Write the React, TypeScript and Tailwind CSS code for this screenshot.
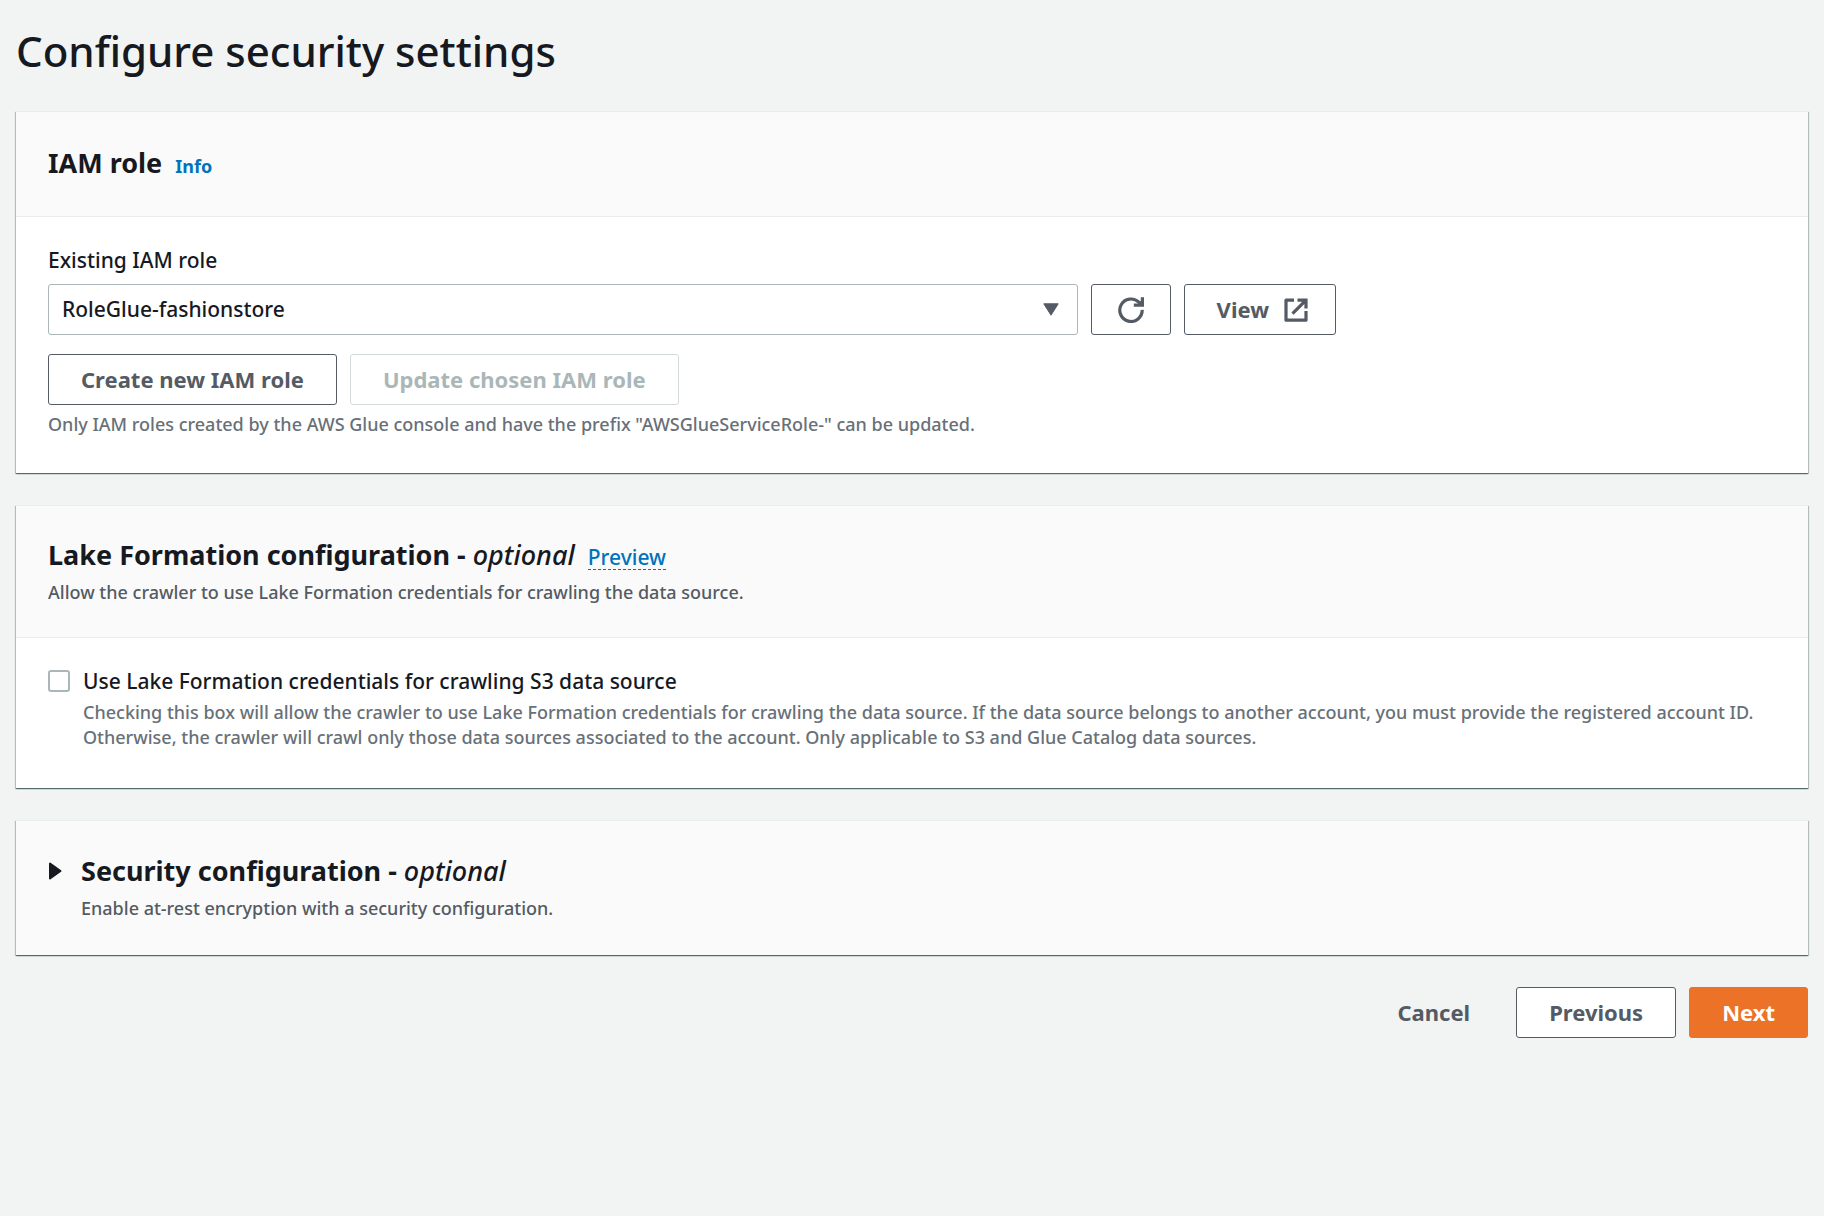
import { useState, type ReactNode } from "react";

const focusRing = "focus-visible:outline-2 focus-visible:outline-offset-2 focus-visible:outline-[#0073bb]";

function Card({ children }: { children: ReactNode }) {
  return (
    <section className="border-t border-[#eaeded] bg-white shadow-[0_1px_1px_0_rgba(0,28,36,0.45),1px_1px_1px_0_rgba(0,28,36,0.2),-1px_1px_1px_0_rgba(0,28,36,0.2)]">
      {children}
    </section>
  );
}

type ButtonProps = {
  children: ReactNode;
  variant?: "normal" | "primary" | "link";
  disabled?: boolean;
  label?: string;
};

function Button({ children, variant = "normal", disabled, label }: ButtonProps) {
  const looks = {
    normal:
      "border-[#545b64] bg-white text-[#545b64] hover:bg-[#fafafa] disabled:border-[#d5dbdb] disabled:text-[#aab7b8]",
    primary: "border-[#eb7226] bg-[#eb7226] text-white",
    link: "border-transparent text-[#545b64]",
  };
  return (
    <button
      type="button"
      disabled={disabled}
      aria-label={label}
      className={`flex h-[51px] shrink-0 items-center justify-center gap-[15px] rounded-[3px] border px-8 text-[22px] font-bold whitespace-nowrap ${looks[variant]} ${focusRing}`}
    >
      {children}
    </button>
  );
}

function RefreshIcon() {
  return (
    <svg viewBox="0 0 26 26" className="-mx-[6px] size-[26px] shrink-0" fill="none" stroke="currentColor" strokeWidth="3.2" aria-hidden="true">
      <path d="M24.2 12.9A11.2 11.2 0 1 1 20.8 5.2L23.5 8" />
      <path d="M24.4 0.2v8h-8.6" />
      <path d="M20 4.5l4 -0.5v4.2h-4z" fill="currentColor" stroke="none" />
    </svg>
  );
}

function ExternalIcon() {
  return (
    <svg viewBox="0 0 24 24" className="-mr-[5px] size-6 shrink-0" fill="none" stroke="currentColor" strokeWidth="3.2" aria-hidden="true">
      <path d="M10 2.2H2v20h20v-9.2" strokeLinejoin="round" />
      <path d="M13.5 2.2h8.5v8.3M21.5 2.7L8.5 15.7" />
    </svg>
  );
}

export default function App() {
  const [open, setOpen] = useState(false);
  return (
    <main className="min-h-screen bg-[#f2f4f3] px-4 pt-[23px] pb-10 font-['Noto_Sans',sans-serif] font-medium text-[#16191f]">
      <h1 className="text-[42px] leading-[55px]">Configure security settings</h1>

      <form className="mt-[33px] flex flex-col gap-8" onSubmit={(e) => e.preventDefault()}>
        <Card>
          <header className="flex items-baseline gap-[13px] border-b border-[#eaeded] bg-[#fafafa] px-8 pt-[31px] pb-[33px]">
            <h2 className="text-[27px] leading-10 font-bold">IAM role</h2>
            <a href="#info" className="text-[18px] font-bold text-[#0073bb]">Info</a>
          </header>
          <div className="px-8 pt-[27px] pb-9">
            <label htmlFor="role" className="block text-[21px] leading-8">Existing IAM role</label>
            <div className="mt-2 flex w-[calc(75%-8px)] gap-[13px]">
              <div className="relative min-w-0 flex-1">
                <select
                  id="role"
                  className={`h-[51px] w-full appearance-none rounded-[3px] border border-[#aab7b8] bg-white pr-12 pl-[13px] text-[21px] ${focusRing}`}
                >
                  <option>RoleGlue-fashionstore</option>
                </select>
                <svg viewBox="0 0 16 13" className="pointer-events-none absolute top-[19px] right-[19px] h-[13px] w-4 text-[#545b64]" fill="currentColor" stroke="currentColor" strokeLinejoin="round" aria-hidden="true">
                  <path d="M0.8 0.8h14.4L8 12.2z" />
                </svg>
              </div>
              <Button label="Refresh roles">
                <RefreshIcon />
              </Button>
              <Button>
                View
                <ExternalIcon />
              </Button>
            </div>
            <div className="mt-[19px] flex gap-[13px]">
              <Button>Create new IAM role</Button>
              <Button disabled>Update chosen IAM role</Button>
            </div>
            <p className="mt-[7px] text-[18px] leading-[25px] text-[#687078]">
              Only IAM roles created by the AWS Glue console and have the prefix "AWSGlueServiceRole-" can be updated.
            </p>
          </div>
        </Card>

        <Card>
          <header className="border-b border-[#eaeded] bg-[#fafafa] px-8 pt-[31px] pb-8">
            <div className="flex items-baseline gap-[13px]">
              <h2 className="text-[27px] leading-[35px] font-bold">
                Lake Formation configuration - <em className="font-medium">optional</em>
              </h2>
              <button type="button" className={`border-b border-dashed border-[#0073bb] text-[21px] leading-6 text-[#0073bb] ${focusRing}`}>
                Preview
              </button>
            </div>
            <p className="mt-2 text-[18px] leading-[25px] text-[#545b64]">
              Allow the crawler to use Lake Formation credentials for crawling the data source.
            </p>
          </header>
          <div className="flex gap-[13px] px-8 pt-[27px] pb-[38px]">
            <input
              id="lake"
              type="checkbox"
              aria-describedby="lake-help"
              className={`mt-[5px] size-[22px] shrink-0 appearance-none rounded-[3px] border-2 border-[#aab7b8] bg-white checked:border-[#0073bb] checked:bg-[#0073bb] ${focusRing}`}
            />
            <div>
              <label htmlFor="lake" className="block text-[21px] leading-8">
                Use Lake Formation credentials for crawling S3 data source
              </label>
              <p id="lake-help" className="mt-[3px] text-[18px] leading-[25px] text-[#687078]">
                Checking this box will allow the crawler to use Lake Formation credentials for crawling the data source. If the data source belongs to another account, you must provide the registered account ID. Otherwise, the crawler will crawl only those data sources associated to the account. Only applicable to S3 and Glue Catalog data sources.
              </p>
            </div>
          </div>
        </Card>

        <Card>
          <div className="bg-[#fafafa] px-8 pt-8 pb-[34px]">
            <h2 className="text-[27px] leading-9 font-bold">
              <button type="button" aria-expanded={open} onClick={() => setOpen(!open)} className={`flex items-center gap-[19px] ${focusRing}`}>
                <svg viewBox="0 0 14 18" className={`h-[18px] w-[14px] shrink-0 ${open ? "rotate-90" : ""}`} fill="currentColor" stroke="currentColor" strokeWidth="2" strokeLinejoin="round" aria-hidden="true">
                  <path d="M2 1.5v15L12.5 9z" />
                </svg>
                <span>
                  Security configuration - <em className="font-medium">optional</em>
                </span>
              </button>
            </h2>
            <p className="mt-[7px] pl-[33px] text-[18px] leading-[25px] text-[#545b64]">
              Enable at-rest encryption with a security configuration.
            </p>
          </div>
        </Card>

        <div className="flex justify-end gap-[13px]">
          <Button variant="link">Cancel</Button>
          <Button>Previous</Button>
          <Button variant="primary">Next</Button>
        </div>
      </form>
    </main>
  );
}
